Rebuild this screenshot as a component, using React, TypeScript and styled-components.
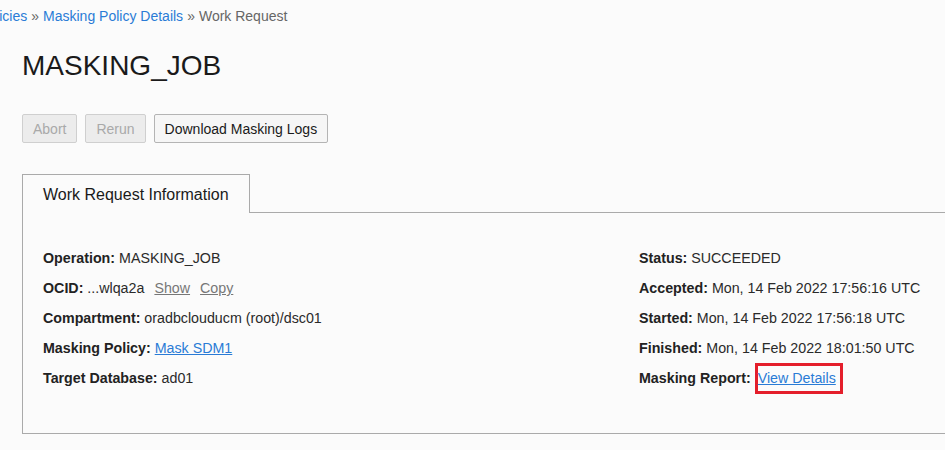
import styled, { createGlobalStyle } from "styled-components";

interface IField {
  label: string;
  value?: string;
  link?: string;
  extras?: string[];
  highlight?: boolean;
}

const leftFields: IField[] = [
  { label: "Operation", value: "MASKING_JOB" },
  { label: "OCID", value: "...wlqa2a", extras: ["Show", "Copy"] },
  { label: "Compartment", value: "oradbclouducm (root)/dsc01" },
  { label: "Masking Policy", link: "Mask SDM1" },
  { label: "Target Database", value: "ad01" },
];

const rightFields: IField[] = [
  { label: "Status", value: "SUCCEEDED" },
  { label: "Accepted", value: "Mon, 14 Feb 2022 17:56:16 UTC" },
  { label: "Started", value: "Mon, 14 Feb 2022 17:56:18 UTC" },
  { label: "Finished", value: "Mon, 14 Feb 2022 18:01:50 UTC" },
  { label: "Masking Report", link: "View Details", highlight: true },
];

function FieldRow({ field }: { field: IField }) {
  return (
    <Row>
      <Label>{field.label}:</Label>
      {field.value && <Value> {field.value}</Value>}
      {field.extras &&
        field.extras.map((x) => <Extra key={x}>{x}</Extra>)}
      {field.link &&
        (field.highlight ? (
          <Highlight>
            <InfoLink href="#">{field.link}</InfoLink>
          </Highlight>
        ) : (
          <Value>
            {" "}
            <InfoLink href="#">{field.link}</InfoLink>
          </Value>
        ))}
    </Row>
  );
}

export default function App() {
  return (
    <>
      <GlobalStyle />
      <Breadcrumb>
        <CrumbLink href="#">Masking Policies</CrumbLink>
        <Sep>»</Sep>
        <CrumbLink href="#">Masking Policy Details</CrumbLink>
        <Sep>»</Sep>
        <Current>Work Request</Current>
      </Breadcrumb>
      <Page>
        <Title>MASKING_JOB</Title>
        <Actions>
          <Button disabled>Abort</Button>
          <Button disabled>Rerun</Button>
          <Button>Download Masking Logs</Button>
        </Actions>
        <Tabs>
          <TabBar>
            <Tab>Work Request Information</Tab>
            <TabFiller />
          </TabBar>
          <Panel>
            <Column>
              {leftFields.map((f) => (
                <FieldRow key={f.label} field={f} />
              ))}
            </Column>
            <Column>
              {rightFields.map((f) => (
                <FieldRow key={f.label} field={f} />
              ))}
            </Column>
          </Panel>
        </Tabs>
      </Page>
    </>
  );
}

const GlobalStyle = createGlobalStyle`
  html, body {
    margin: 0;
    padding: 0;
    background: #fbfbfb;
    overflow: hidden;
    font-family: "Liberation Sans", Arial, sans-serif;
    color: #222;
  }
`;

const Breadcrumb = styled.div`
  height: 32px;
  display: flex;
  align-items: center;
  margin-left: -77px;
  font-size: 14px;
  white-space: nowrap;
`;

const CrumbLink = styled.a`
  color: #2a7bd6;
  text-decoration: none;
`;

const Sep = styled.span`
  color: #666;
  margin: 0 4px;
`;

const Current = styled.span`
  color: #666;
`;

const Page = styled.div`
  padding-left: 22px;
`;

const Title = styled.h1`
  margin: 16px 0 0;
  font-size: 28px;
  font-weight: 400;
  line-height: 36px;
  color: #1a1a1a;
`;

const Actions = styled.div`
  display: flex;
  gap: 8px;
  margin-top: 30px;
`;

const Button = styled.button`
  height: 29px;
  padding: 0 10px;
  font-family: "Liberation Sans", Arial, sans-serif;
  font-size: 14px;
  border-radius: 2px;
  border: 1px solid #b4b4b4;
  background: #f6f6f6;
  color: #1a1a1a;

  &:disabled {
    border-color: #cfcfcf;
    background: #ececec;
    color: #a9a9a9;
  }
`;

const Tabs = styled.div`
  margin-top: 31px;
  margin-right: -20px;
`;

const TabBar = styled.div`
  display: flex;
  height: 39px;
`;

const Tab = styled.div`
  width: 206px;
  padding: 1px 0 0 20px;
  border: 1px solid #aaa;
  border-bottom: none;
  display: flex;
  align-items: center;
  font-size: 16px;
  color: #1a1a1a;
`;

const TabFiller = styled.div`
  flex: 1;
  border-bottom: 1px solid #aaa;
`;

const Panel = styled.div`
  display: grid;
  grid-template-columns: 596px 1fr;
  padding: 30px 0 40px 20px;
  border-left: 1px solid #aaa;
  border-bottom: 1px solid #aaa;
`;

const Column = styled.div`
  display: flex;
  flex-direction: column;
`;

const Row = styled.div`
  height: 30px;
  display: flex;
  align-items: center;
  font-size: 14.25px;
  white-space: pre;
`;

const Label = styled.span`
  font-weight: 700;
  color: #222;
`;

const Value = styled.span`
  color: #2a2a2a;
`;

const Extra = styled.a`
  margin-left: 10px;
  color: #777;
  text-decoration: underline;
`;

const InfoLink = styled.a`
  color: #2a7bd6;
  text-decoration: underline;
`;

const Highlight = styled.span`
  display: inline-flex;
  align-items: center;
  height: 25px;
  padding: 0 4px 0 0;
  margin-left: 4px;
  border: 3px solid #e41e2b;
`;
